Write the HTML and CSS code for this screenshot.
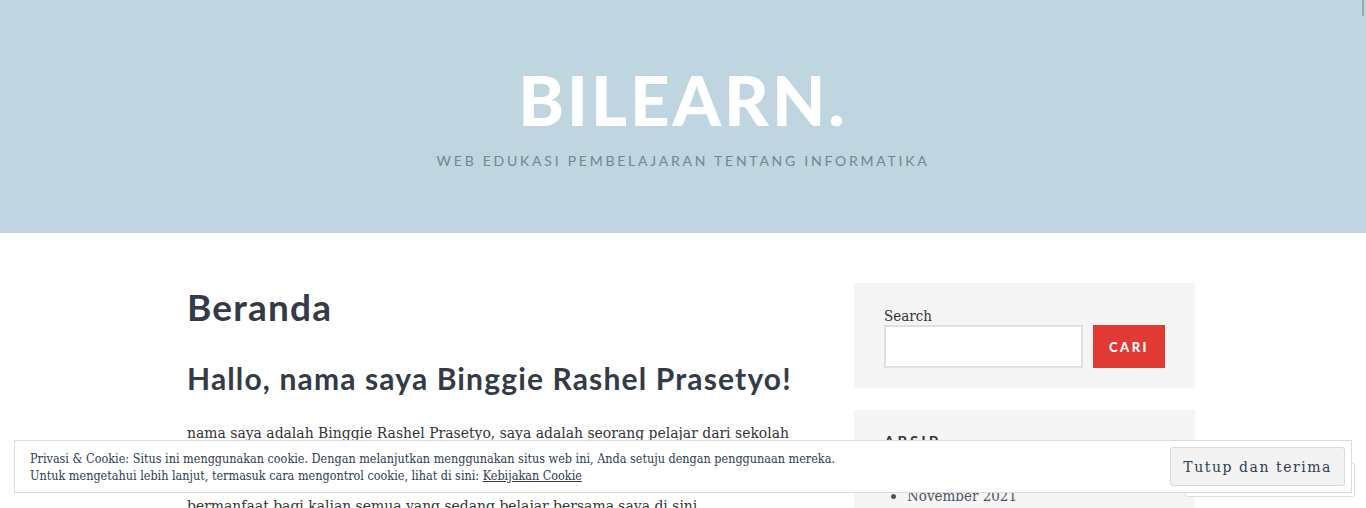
FILE: index.html
```html
<!DOCTYPE html>
<html lang="id">
<head>
<meta charset="utf-8">
<title>BILEARN.</title>
<link rel="stylesheet" href="styles.css">
</head>
<body>
<header class="site-header">
  <h1 class="site-title">BILEARN.</h1>
  <p class="site-description">Web Edukasi Pembelajaran Tentang Informatika</p>
  <span class="corner-mark"></span>
</header>
<div class="site-content">
  <main class="content">
    <h1 class="page-title">Beranda</h1>
    <h2 class="post-heading">Hallo, nama saya Binggie Rashel Prasetyo!</h2>
    <p class="post-text">nama saya adalah Binggie Rashel Prasetyo, saya adalah seorang pelajar dari sekolah menengah kejuruan yang sedang belajar tentang dunia informatika dan teknologi. Di web ini saya akan berbagi materi pembelajaran seputar informatika yang semoga dapat bermanfaat bagi kalian semua yang sedang belajar bersama saya di sini.</p>
  </main>
  <aside class="sidebar">
    <section class="widget widget-search">
      <label class="search-label" for="s">Search</label>
      <div class="search-row">
        <input class="search-input" id="s" type="text">
        <button class="search-button">Cari</button>
      </div>
    </section>
    <section class="widget widget-archive">
      <h3 class="widget-title">Arsip</h3>
      <ul class="archive-list">
        <li>November 2021</li>
      </ul>
    </section>
  </aside>
</div>
<div class="ghost-box"></div>
<div class="cookie-banner">
  <div class="cookie-text">
    Privasi &amp; Cookie: Situs ini menggunakan cookie. Dengan melanjutkan menggunakan situs web ini, Anda setuju dengan penggunaan mereka.<br>
    Untuk mengetahui lebih lanjut, termasuk cara mengontrol cookie, lihat di sini: <a href="#">Kebijakan Cookie</a>
  </div>
  <button class="cookie-button">Tutup dan terima</button>
</div>
</body>
</html>
```
FILE: styles.css
```css
* { box-sizing: border-box; }
html, body { margin: 0; padding: 0; }
body {
  background: #fff;
  color: #333;
  font-family: "DejaVu Serif", "Liberation Serif", serif;
  font-stretch: condensed;
  overflow: hidden;
}
.site-header {
  position: relative;
  background: #bfd5df;
  height: 233px;
  text-align: center;
  padding-top: 64px;
}
.site-title {
  margin: 0;
  font-family: "Lato", "Inter", sans-serif;
  font-weight: 900;
  font-size: 69px;
  line-height: 72px;
  color: #fff;
  letter-spacing: 3px;
}
.site-description {
  margin: 16px 0 0;
  font-family: "Lato", sans-serif;
  font-size: 14px;
  text-transform: uppercase;
  letter-spacing: 2.75px;
  color: #738595;
}
.corner-mark {
  position: absolute;
  top: 0;
  right: 2px;
  width: 2px;
  height: 16px;
  border-left: 1px solid #9aa9b3;
  border-right: 1px solid #9aa9b3;
}
.site-content {
  display: flex;
  width: 1024px;
  margin: 0 auto;
  padding-top: 50px;
  padding-left: 16px;
  gap: 24px;
}
.content { flex: 1; }
.page-title {
  margin: 0;
  font-family: "Lato", sans-serif;
  font-weight: 700;
  font-size: 37px;
  line-height: 48px;
  letter-spacing: 1.2px;
  color: #333b46;
}
.post-heading {
  margin: 27px 0 0;
  font-family: "Lato", sans-serif;
  font-weight: 700;
  font-size: 30px;
  line-height: 40px;
  letter-spacing: 1.15px;
  color: #333b46;
}
.post-text {
  margin: 23px 0 0;
  font-size: 15.5px;
  line-height: 24.3px;
  color: #333;
}
.sidebar {
  width: 341px;
  flex: none;
  display: flex;
  flex-direction: column;
  gap: 22px;
}
.widget {
  background: #f5f5f5;
  padding: 24px 30px 20px;
}
.search-label {
  display: block;
  font-size: 15px;
  line-height: 18px;
  color: #333;
}
.search-row {
  display: flex;
  gap: 10px;
}
.search-input {
  width: 199px;
  height: 43px;
  border: 2px solid #e0e0e0;
  background: #fff;
}
.search-button {
  width: 72px;
  height: 43px;
  border: none;
  background: #e03a35;
  color: #fff;
  font-family: "Lato", sans-serif;
  font-weight: 900;
  font-size: 13px;
  letter-spacing: 2.5px;
  text-transform: uppercase;
}
.widget-archive { padding-top: 22px; }
.widget-title {
  margin: 0;
  font-family: "Lato", sans-serif;
  font-weight: 700;
  font-size: 15px;
  letter-spacing: 3px;
  text-transform: uppercase;
  color: #333b46;
}
.archive-list {
  margin: 37px 0 0;
  padding-left: 23px;
  font-size: 15px;
  color: #4a5566;
}
.ghost-box {
  position: fixed;
  left: 1185px;
  top: 463px;
  width: 170px;
  height: 34px;
  border: 1px solid #ddd;
  border-radius: 3px;
  background: #fff;
}
.cookie-banner {
  position: fixed;
  left: 14px;
  right: 14px;
  bottom: 15px;
  height: 53px;
  background: #fff;
  border: 1px solid #dcdcdc;
  display: flex;
  align-items: center;
  justify-content: space-between;
  padding: 0 6px 0 15px;
}
.cookie-text {
  font-size: 12.5px;
  line-height: 17px;
  color: #2e3d52;
}
.cookie-text a { color: #2e3d52; }
.cookie-button {
  height: 39px;
  padding: 0 12px;
  background: #f3f3f3;
  border: 1px solid #dadada;
  border-radius: 3px;
  font-family: "DejaVu Serif", "Liberation Serif", serif;
  font-size: 14px;
  letter-spacing: 1.55px;
  color: #2e3d52;
}
```
